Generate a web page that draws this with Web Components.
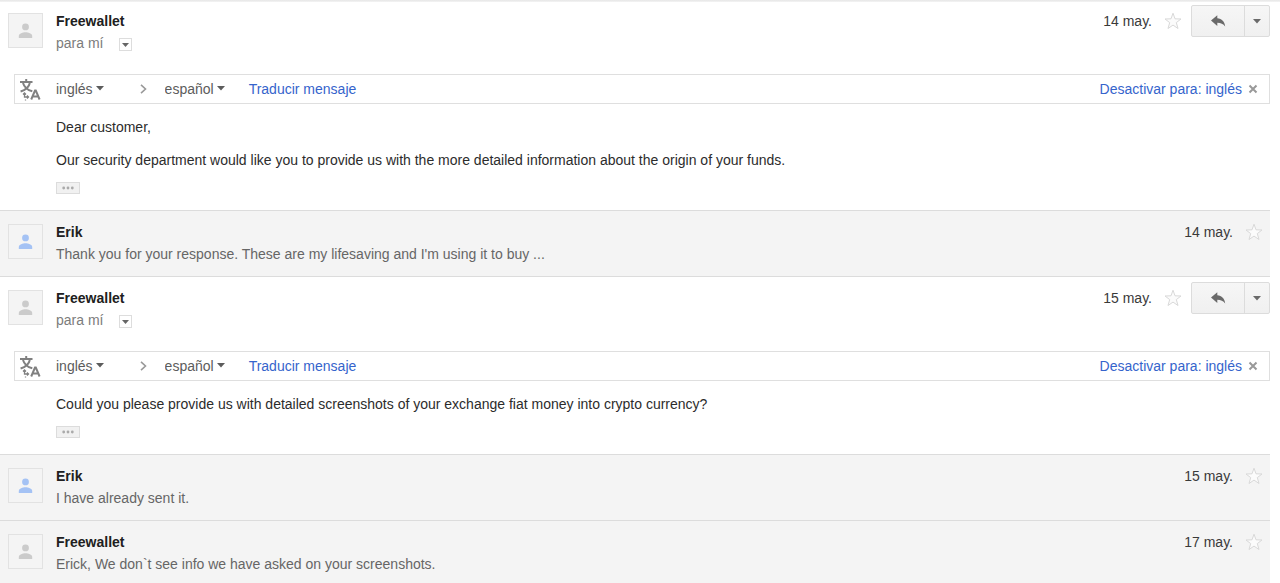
<!DOCTYPE html>
<html lang="es">
<head>
<meta charset="utf-8">
<meta name="viewport" content="width=device-width, initial-scale=1">
<title>Freewallet</title>
<style>
  body { margin: 0; background: #fff; color: #2c2c2c; font: 14px/22px "Liberation Sans", Arial, sans-serif; }
  p { margin: 0; }
</style>
</head>
<body>
<mail-thread>
  <mail-message sender="Freewallet" date="14 may." open>
    <p>Dear customer,</p>
    <p>Our security department would like you to provide us with the more detailed information about the origin of your funds.</p>
  </mail-message>
  <mail-message sender="Erik" date="14 may." tone="blue">
    <p>Thank you for your response. These are my lifesaving and I'm using it to buy ...</p>
  </mail-message>
  <mail-message sender="Freewallet" date="15 may." open>
    <p>Could you please provide us with detailed screenshots of your exchange fiat money into crypto currency?</p>
  </mail-message>
  <mail-message sender="Erik" date="15 may." tone="blue">
    <p>I have already sent it.</p>
  </mail-message>
  <mail-message sender="Freewallet" date="17 may.">
    <p>Erick, We don`t see info we have asked on your screenshots.</p>
  </mail-message>
</mail-thread>

<script>
const BUTTON_RESET = `
  button { font: inherit; color: inherit; padding: 0; margin: 0; border: 0; background: none; cursor: pointer;
           display: flex; align-items: center; justify-content: center; box-sizing: border-box; }
  svg { display: block; }
`;

function define(name, render) {
  customElements.define(name, class extends HTMLElement {
    constructor() {
      super();
      this.attachShadow({ mode: "open" });
    }
    connectedCallback() {
      this.shadowRoot.innerHTML = render(this);
    }
  });
}

define("mail-thread", () => `
  <style>
    :host { display: flex; flex-direction: column; min-height: 100vh; box-sizing: border-box; padding-right: 10px;
            background: linear-gradient(#e6e6e6, #f4f4f4) top / 100% 2px no-repeat; }
    ::slotted(mail-message:first-child) { border-top: 0; }
    ::slotted(mail-message:last-child) { flex: 1; padding-bottom: 0; }
  </style>
  <slot></slot>
`);

define("user-avatar", () => `
  <style>
    :host { display: flex; align-items: center; justify-content: center; flex: none; box-sizing: border-box;
            width: 35px; height: 35px; border: 1px solid #e2e2e2; background: #f4f4f4; color: #cbcbcb; }
    :host([tone="blue"]) { color: #a4c2f4; }
    svg { display: block; }
  </style>
  <svg width="15" height="17" viewBox="0 0 15 17" fill="currentColor" aria-hidden="true">
    <circle cx="7.5" cy="4.9" r="3.4"/>
    <path d="M.8 15.900v-1.900c0-2.400 4.200-3.700 6.700-3.700s6.700 1.300 6.700 3.700v1.900z"/>
  </svg>
`);

define("star-toggle", () => `
  <style>
    :host { display: block; flex: none; }
    ${BUTTON_RESET}
    button { width: 18px; height: 22px; }
  </style>
  <button type="button" aria-label="Destacar" aria-pressed="false">
    <svg width="18" height="18" viewBox="0 0 18 18" fill="#fbfbfb" stroke="#d9d9d9" aria-hidden="true">
      <path d="M9 1.200l2 5.600 6 .2-4.700 3.600 1.700 5.900L9 13.100 4 16.500l1.700-5.900L1 7l6-.2z"/>
    </svg>
  </button>
`);

define("reply-actions", () => `
  <style>
    :host { display: flex; flex: none; box-sizing: border-box; height: 32px; border: 1px solid #dcdcdc; border-radius: 2px;
            background: linear-gradient(#f6f6f6, #f0f0f0); color: #6a6a6a; }
    ${BUTTON_RESET}
    .reply { width: 52px; }
    .more { width: 25px; border-left: 1px solid #dcdcdc; }
  </style>
  <button type="button" class="reply" aria-label="Responder">
    <svg width="16" height="12" viewBox="0 0 16 12" fill="currentColor" aria-hidden="true">
      <path d="M7.300.3v2.900c4.500.3 7.400 3.300 7.900 8.300-1.900-2.500-4.300-3.700-7.900-3.700v3.200L1 5.500z"/>
    </svg>
  </button>
  <button type="button" class="more" aria-label="Más">
    <svg width="8" height="5" viewBox="0 0 8 5" fill="currentColor" aria-hidden="true"><path d="M0 0h8L4 4.600z"/></svg>
  </button>
`);

define("language-picker", host => `
  <style>
    :host { display: inline-grid; align-items: center; color: #5c5c5c; }
    select, svg { grid-area: 1 / 1; }
    select { appearance: none; border: 0; margin: 0; padding: 0 11px 0 0; background: none; color: inherit;
             font: inherit; cursor: pointer; field-sizing: content; }
    svg { justify-self: end; pointer-events: none; }
  </style>
  <select aria-label="${host.getAttribute("label")}"><option>${host.getAttribute("value")}</option></select>
  <svg width="8" height="6" viewBox="0 0 8 6" fill="currentColor" aria-hidden="true"><path d="M0 0h8L4 4.500z"/></svg>
`);

define("translate-bar", () => `
  <style>
    :host { display: flex; align-items: center; box-sizing: border-box; height: 30px; border: 1px solid #dfdfdf;
            padding: 0 11px 0 4px; }
    a { color: #3564cc; text-decoration: none; }
    ${BUTTON_RESET}
    .icon { margin-right: 15px; }
    .chevron { margin: 0 18px 0 36px; }
    .go { margin-left: 24px; }
    .off { margin-left: auto; }
    button { margin-left: 6px; }
  </style>
  <svg class="icon" width="22" height="24" viewBox="0 0 22 24" fill="none" stroke="#808080" stroke-width="2" aria-hidden="true">
    <path d="M1 5h12.500M7.200 2v3M4 6c1.200 4 4.300 7 9.300 8.300M10.800 6C10 10 7 12.800 1.600 14.500"/>
    <path d="M12.200 22.500l3.800-9h.800l3.800 9M13.800 19.500h5.400"/>
    <path d="M5.500 16v4h4M4 17.500l1.500-1.500 1.500 1.500M8 18.500l1.500 1.500L8 21.500M6.500 22.500v1" stroke-width="1.300"/>
  </svg>
  <language-picker label="Idioma de origen" value="inglés"></language-picker>
  <svg class="chevron" width="7" height="10" viewBox="0 0 7 10" fill="none" stroke="#999" stroke-width="1.600" aria-hidden="true">
    <path d="M1 .8L5.500 5 1 9.200"/>
  </svg>
  <language-picker label="Idioma de destino" value="español"></language-picker>
  <a class="go" href="#traducir">Traducir mensaje</a>
  <a class="off" href="#desactivar">Desactivar para: inglés</a>
  <button type="button" aria-label="Cerrar">
    <svg width="10" height="10" viewBox="0 0 10 10" fill="none" stroke="#999" stroke-width="2" aria-hidden="true">
      <path d="M1.500 1.500l7 7M8.500 1.500l-7 7"/>
    </svg>
  </button>
`);

define("trimmed-toggle", () => `
  <style>
    :host { display: block; }
    ${BUTTON_RESET}
    button { width: 24px; height: 12px; border: 1px solid #dcdcdc; background: #f1f1f1; }
  </style>
  <button type="button" aria-label="Mostrar contenido acortado">
    <svg width="12" height="4" viewBox="0 0 12 4" fill="#aaa" aria-hidden="true">
      <circle cx="1.700" cy="2" r="1.400"/><circle cx="6" cy="2" r="1.400"/><circle cx="10.300" cy="2" r="1.400"/>
    </svg>
  </button>
`);

define("mail-message", host => {
  const open = host.hasAttribute("open");
  return `
  <style>
    :host { display: block; border-top: 1px solid #dcdcdc; padding-bottom: 11px; background: #f4f4f4; }
    :host([open]) { background: none; padding-bottom: 16px; }
    ${BUTTON_RESET}
    header { display: flex; align-items: flex-start; padding-left: 8px; }
    user-avatar { margin: 13px 13px 0 0; }
    .text { flex: 1; min-width: 0; padding-top: 10px; }
    .name { color: #202020; font-weight: bold; }
    .preview { color: #666; }
    .to { display: flex; align-items: center; gap: 16px; color: #7c7c7c; }
    .details { width: 13px; height: 13px; margin-top: 3px; border: 1px solid #ddd; color: #666; }
    .side { display: flex; align-items: flex-start; padding: 10px 7px 0 0; color: #3a3a3a; }
    :host([open]) .side { padding-right: 0; }
    star-toggle { margin-left: 12px; }
    reply-actions { margin: -5px 0 0 9px; }
    translate-bar { margin: 20px 0 0 14px; }
    .body { display: flex; flex-direction: column; gap: 11px; padding: 12px 0 0 56px; }
  </style>
  <header>
    <user-avatar tone="${host.getAttribute("tone") || "grey"}"></user-avatar>
    <div class="text">
      <div class="name">${host.getAttribute("sender")}</div>
      ${open ? `
      <div class="to"><span>para mí</span>
        <button type="button" class="details" aria-label="Mostrar detalles">
          <svg width="7" height="4" viewBox="0 0 7 4" fill="currentColor" aria-hidden="true"><path d="M0 0h7L3.500 4z"/></svg>
        </button>
      </div>` : `<div class="preview"><slot></slot></div>`}
    </div>
    <div class="side">
      <time>${host.getAttribute("date")}</time>
      <star-toggle></star-toggle>
      ${open ? "<reply-actions></reply-actions>" : ""}
    </div>
  </header>
  ${open ? `
  <translate-bar></translate-bar>
  <div class="body"><slot></slot><trimmed-toggle></trimmed-toggle></div>` : ""}
`;
});
</script>
</body>
</html>
